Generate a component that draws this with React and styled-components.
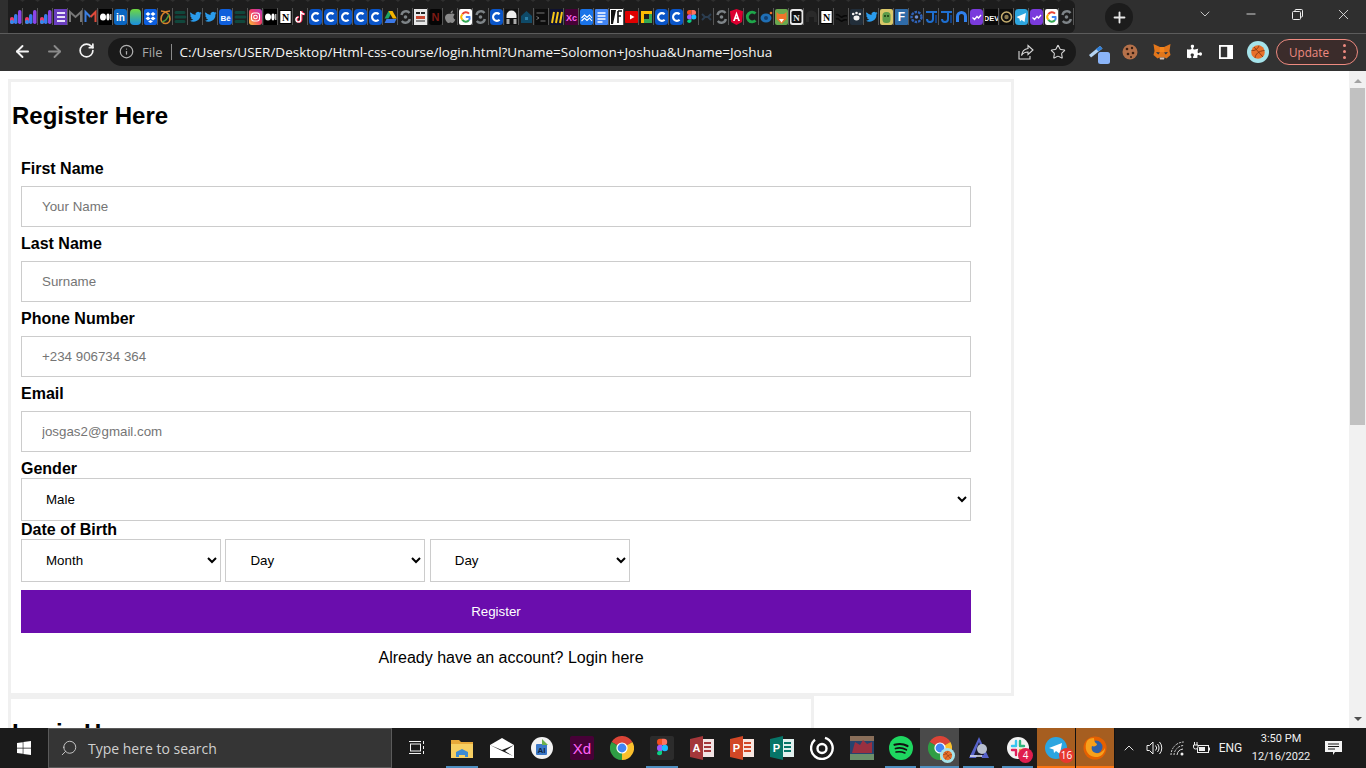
import React from 'react';
import styled, { createGlobalStyle } from 'styled-components';
import { ArrowLeft, ArrowRight, RotateCw, Info, Star, Plus, ChevronDown, Minus, X, Search } from 'lucide-react';
import { FaWindows, FaPuzzlePiece } from 'react-icons/fa';

const GlobalStyle = createGlobalStyle`
  html, body {
    margin: 0;
    height: 100%;
    overflow: hidden;
    background: #fff;
    font-family: "Liberation Sans", Arial, sans-serif;
  }
`;

const Screen = styled.div`
  width: 1366px;
  height: 768px;
  display: flex;
  flex-direction: column;
  overflow: hidden;
`;

/* title bar with the tab strip */
const TitleBar = styled.div`
  height: 33px;
  flex: none;
  display: flex;
  align-items: stretch;
  padding-left: 8px;
  background: #2f2f2f;
  border-bottom: 1px solid #5c5c5c;
  color: #e8e8e8;
`;

const TabStrip = styled.div`
  width: 1067px;
  flex: none;
  display: flex;
  background: #1d1d1d;
  border-bottom-right-radius: 6px;
  border-top-right-radius: 6px;
`;

const Tab = styled.div`
  width: 15.03px;
  flex: none;
  position: relative;
  display: flex;
  align-items: flex-start;
  justify-content: center;
  padding-top: 9px;
  box-sizing: border-box;

  &::after {
    content: '';
    position: absolute;
    right: 0;
    top: 8px;
    width: 1px;
    height: 17px;
    background: #555;
  }

  &::before {
    content: '';
    position: absolute;
    right: -2px;
    top: 0;
    width: 5px;
    height: 2px;
    background: #2f2f2f;
    clip-path: polygon(0 0, 100% 0, 50% 100%);
  }
`;

const NewTab = styled.div`
  width: 28px;
  height: 28px;
  margin: 3px 0 0 30px;
  border-radius: 50%;
  background: #1c1c1c;
  display: flex;
  align-items: center;
  justify-content: center;
`;

const WindowControls = styled.div`
  margin-left: auto;
  display: flex;
`;

const WindowButton = styled.div`
  width: 46px;
  height: 28px;
  display: flex;
  align-items: center;
  justify-content: center;
`;

/* address bar row */
const Toolbar = styled.div`
  height: 37px;
  flex: none;
  display: flex;
  align-items: center;
  background: #323232;
  color: #f0f0f0;
  padding-bottom: 2px;
  box-sizing: border-box;
`;

const NavButton = styled.div`
  width: 32px;
  display: flex;
  justify-content: center;
  color: ${(p) => (p.$off ? '#8a8a8a' : '#f4f4f4')};
`;

const NavGroup = styled.div`
  width: 108px;
  flex: none;
  display: flex;
  padding-left: 6px;
  box-sizing: border-box;
`;

const AddressPill = styled.div`
  width: 968px;
  height: 28px;
  flex: none;
  display: flex;
  align-items: center;
  border-radius: 14px;
  background: #1a1a1a;
  padding: 0 10px 0 11px;
  box-sizing: border-box;
  font-family: "Open Sans", sans-serif;
`;

const Scheme = styled.span`
  margin-left: 8px;
  padding-right: 8px;
  border-right: 1px solid #8a8a8a;
  font-size: 13px;
  line-height: 16px;
  color: #a8a8a8;
`;

const Url = styled.span`
  margin-left: 8px;
  font-size: 13.5px;
  color: #f5f5f5;
  white-space: nowrap;
`;

const PillActions = styled.div`
  margin-left: auto;
  display: flex;
  align-items: center;
  gap: 16px;
  color: #d8d8d8;
`;

const Extensions = styled.div`
  display: flex;
  align-items: center;
  margin-left: 9px;
`;

const ExtSlot = styled.div`
  width: ${(p) => p.$w || 32}px;
  height: 28px;
  flex: none;
  display: flex;
  align-items: center;
  justify-content: center;
`;

const UpdatePill = styled.div`
  width: 82px;
  height: 26px;
  margin-left: 2px;
  box-sizing: border-box;
  border: 1px solid #ee8a80;
  border-radius: 13px;
  background: #3b2c2b;
  display: flex;
  align-items: center;
  justify-content: space-between;
  padding: 0 11px 0 12px;
  color: #ee8a80;
  font-size: 11.7px;
  font-family: "Open Sans", sans-serif;
`;

const Dots = styled.span`
  display: flex;
  flex-direction: column;
  gap: 3px;

  i {
    width: 3px;
    height: 3px;
    border-radius: 50%;
    background: #ee8a80;
  }
`;

/* page */
const Viewport = styled.div`
  flex: 1;
  min-height: 0;
  display: flex;
  background: #fff;
`;

const Page = styled.div`
  flex: 1;
  min-width: 0;
  overflow: hidden;
  padding: 8px;
`;

const Card = styled.section`
  width: ${(p) => p.$width}px;
  border: 3px solid #f0f0f0;
`;

const Heading = styled.h2`
  margin: 20px 1px 30px;
  font-size: 24px;
  line-height: 28px;
  font-weight: bold;
  color: #000;
`;

const Form = styled.form`
  padding: 0 10px;
`;

const Label = styled.label`
  display: block;
  font-size: 16px;
  font-weight: bold;
  line-height: 18px;
  color: #000;
`;

const Input = styled.input`
  display: block;
  width: 950px;
  height: 41px;
  margin: 8px 0;
  box-sizing: border-box;
  padding: 0 20px;
  border: 1px solid #ccc;
  font-family: "Liberation Sans", Arial, sans-serif;
  font-size: 13.33px;

  &::placeholder {
    color: #757575;
  }
`;

const Select = styled.select`
  display: block;
  width: ${(p) => p.$width || 950}px;
  height: 43px;
  box-sizing: border-box;
  padding: 0 0 0 20px;
  border: 1px solid #ccc;
  border-radius: 0;
  background: #fff;
  color: #000;
  font-family: "Liberation Sans", Arial, sans-serif;
  font-size: 13.33px;
`;

const DateRow = styled.div`
  display: flex;
  gap: 4.4px;
`;

const Submit = styled.button`
  display: block;
  width: 950px;
  height: 43px;
  margin-top: 8px;
  border: none;
  background: #6a0dad;
  color: #fff;
  font-family: "Liberation Sans", Arial, sans-serif;
  font-size: 13.33px;
`;

const LoginHint = styled.p`
  margin: 16px 0 26px;
  text-align: center;
  font-size: 16px;
  line-height: 18px;
  color: #000;
`;

const Scrollbar = styled.div`
  width: 17px;
  flex: none;
  display: flex;
  flex-direction: column;
  align-items: center;
  background: #f1f1f1;
  color: #505050;
`;

const ScrollArrow = styled.div`
  width: 0;
  height: 0;
  border-left: 4px solid transparent;
  border-right: 4px solid transparent;
  ${(p) => (p.$down ? 'border-top: 4px solid #505050;' : 'border-bottom: 4px solid #a3a3a3;')}
  margin: ${(p) => (p.$down ? 'auto 0 7px' : '8px 0 5px')};
`;

const ScrollThumb = styled.div`
  width: 15px;
  height: 337px;
  background: #c1c1c1;
`;

/* windows taskbar */
const Taskbar = styled.div`
  height: 40px;
  flex: none;
  display: flex;
  background: #1b1b1b;
  color: #f2f2f2;
`;

const StartButton = styled.div`
  width: 48px;
  flex: none;
  display: flex;
  align-items: center;
  justify-content: center;
`;

const SearchBox = styled.div`
  width: 344px;
  flex: none;
  box-sizing: border-box;
  display: flex;
  align-items: center;
  gap: 10px;
  padding-left: 11px;
  background: #353535;
  border: 1px solid #5a5a5a;
  color: #d0d0d0;
  font-family: "Open Sans", sans-serif;
  font-size: 14px;
`;

const SearchGlyph = styled(Search)`
  transform: scaleX(-1);
`;

const UpChevron = styled(ChevronDown)`
  transform: rotate(180deg);
`;

const TaskTile = styled.div`
  width: ${(p) => p.$w || 40}px;
  height: 40px;
  flex: none;
  box-sizing: border-box;
  position: relative;
  display: flex;
  align-items: center;
  justify-content: center;
  background: ${(p) => (p.$flash ? '#a65e20' : p.$active ? '#4a4a4a' : 'transparent')};
  border-right: ${(p) => (p.$flash ? '1px solid #111' : 'none')};

  &::after {
    content: '';
    display: ${(p) => (p.$line ? 'block' : 'none')};
    position: absolute;
    left: ${(p) => (p.$active || p.$flash ? 0 : '4px')};
    right: ${(p) => (p.$active || p.$flash ? 0 : '4px')};
    bottom: 0;
    height: 2px;
    background: ${(p) => (p.$flash ? '#f97414' : '#4f8fc0')};
  }
`;

const Badge = styled.span`
  position: absolute;
  right: ${(p) => p.$right}px;
  bottom: 5px;
  min-width: 15px;
  height: 15px;
  padding: 0 1px;
  box-sizing: border-box;
  border-radius: 8px;
  background: ${(p) => p.$bg || '#e01e4e'};
  color: #fff;
  font-family: "Open Sans", sans-serif;
  font-size: 10px;
  line-height: 15px;
  text-align: center;
`;

const Tray = styled.div`
  display: flex;
  align-items: center;
`;

const TrayItem = styled.div`
  width: ${(p) => p.$w}px;
  flex: none;
  display: flex;
  justify-content: center;
  color: #f0f0f0;
`;

const TrayText = styled.div`
  font-family: Roboto, sans-serif;
  font-size: ${(p) => p.$size || 12}px;
  line-height: 18px;
  text-align: center;
  white-space: nowrap;
`;

/* favicons, 13x16 because the tabs are squeezed so far they clip them */
const FavSvg = ({ children }) => (
  <svg width="13" height="16" viewBox="0 0 13 16">{children}</svg>
);

const FavLetter = ({ bg, fg = '#fff', children, size = 11, r = 3 }) => (
  <FavSvg>
    <rect width="13" height="16" rx={r} fill={bg} />
    <text x="6.5" y="12" textAnchor="middle" fontFamily="Liberation Sans" fontWeight="bold" fontSize={size} fill={fg}>{children}</text>
  </FavSvg>
);

const favicons = {
  bars: (
    <FavSvg>
      <rect x="1" y="8" width="4" height="7" rx="2" fill="#ee3b6f" />
      <rect x="1" y="11" width="4" height="4" rx="2" fill="#2f8df0" />
      <rect x="5" y="5" width="3.5" height="10" rx="1.7" fill="#3a7bf0" />
      <rect x="9" y="1" width="3.5" height="14" rx="1.7" fill="#8b45e8" />
    </FavSvg>
  ),
  list: (
    <FavSvg>
      <rect width="13" height="16" fill="#6b3fc0" />
      <path d="M3 4h8M3 8h8M3 12h8" stroke="#e9e2fa" strokeWidth="2" />
    </FavSvg>
  ),
  greyM: <FavSvg><path d="M1 13V3l5.5 5L12 3v10" fill="none" stroke="#777" strokeWidth="2" /></FavSvg>,
  gmail: (
    <FavSvg>
      <path d="M1.5 13V3l5 5" fill="none" stroke="#3d7fe0" strokeWidth="2" />
      <path d="M11.5 13V3l-5 5" fill="none" stroke="#e04a3a" strokeWidth="2" />
    </FavSvg>
  ),
  medium: (
    <FavSvg>
      <rect width="13" height="16" fill="#000" />
      <ellipse cx="4" cy="8" rx="3" ry="3.6" fill="#fff" />
      <ellipse cx="9" cy="8" rx="1.6" ry="3.4" fill="#fff" />
      <rect x="11.3" y="5" width="1" height="6" fill="#fff" />
    </FavSvg>
  ),
  linkedin: <FavLetter bg="#0a66c2" size={10}>in</FavLetter>,
  gradient: (
    <FavSvg>
      <defs>
        <linearGradient id="gb" x1="0" y1="0" x2="0" y2="1">
          <stop offset="0" stopColor="#6ed840" />
          <stop offset="1" stopColor="#1a8fe0" />
        </linearGradient>
      </defs>
      <rect x="1" width="11" height="16" rx="4" fill="url(#gb)" />
    </FavSvg>
  ),
  dropbox: (
    <FavSvg>
      <rect width="13" height="16" rx="2" fill="#0d5fe0" />
      <path d="M4 3l2.5 2L4 7 1.5 5zM9 3l2.5 2L9 7 6.5 5zM4 7.5l2.5 2-2.5 2-2.5-2zM9 7.5l2.5 2-2.5 2-2.5-2zM4 12.5l2.5-1.5L9 12.5 6.5 14z" fill="#fff" />
    </FavSvg>
  ),
  ring: (
    <FavSvg>
      <path d="M2 2c6 0 9 4 9 8a4.5 4.5 0 1 1-9 0c0-4 3-8 9-8" fill="none" stroke="#d8822a" strokeWidth="1.6" />
      <path d="M3 13c3-1 6-4 7-8" fill="none" stroke="#4f9a3c" strokeWidth="1.4" />
    </FavSvg>
  ),
  stack: (
    <FavSvg>
      <path d="M2 3.5h8M2 8h9M2 12.5h8" stroke="#10473c" strokeWidth="3" strokeLinecap="round" />
    </FavSvg>
  ),
  twitter: (
    <FavSvg>
      <path d="M12.6 4c-.5.2-.9.3-1.4.4.5-.3.9-.8 1.1-1.4-.5.3-1 .5-1.6.6a2.5 2.5 0 0 0-4.2 2.3A7 7 0 0 1 1.4 3.3a2.5 2.5 0 0 0 .8 3.3c-.4 0-.8-.1-1.1-.3 0 1.2.9 2.2 2 2.5-.4.1-.8.1-1.1 0 .3 1 1.2 1.7 2.3 1.7A5 5 0 0 1 .6 11.6a7 7 0 0 0 10.8-6.2c.5-.4.9-.8 1.2-1.4z" fill="#2a9bec" />
    </FavSvg>
  ),
  behance: <FavLetter bg="#0f5fdc" size={8}>Bē</FavLetter>,
  instagram: (
    <FavSvg>
      <defs>
        <linearGradient id="ig" x1="0" y1="1" x2="1" y2="0">
          <stop offset="0" stopColor="#fbbf35" />
          <stop offset="0.55" stopColor="#ee3a6a" />
          <stop offset="1" stopColor="#b43ac2" />
        </linearGradient>
      </defs>
      <rect width="13" height="16" rx="3" fill="url(#ig)" />
      <rect x="2.5" y="4" width="8" height="8" rx="2.4" fill="none" stroke="#fff" strokeWidth="1.1" />
      <circle cx="6.5" cy="8" r="1.8" fill="none" stroke="#fff" strokeWidth="1.1" />
    </FavSvg>
  ),
  notion: (
    <FavSvg>
      <rect x="0.8" y="1.5" width="11.4" height="13" fill="#fff" stroke="#000" strokeWidth="1" />
      <text x="6.5" y="12" textAnchor="middle" fontFamily="Liberation Serif" fontWeight="bold" fontSize="10" fill="#000">N</text>
    </FavSvg>
  ),
  tiktok: (
    <FavSvg>
      <path d="M7.5 2v8.5a2.4 2.4 0 1 1-2.4-2.4M7.5 2c.3 2 1.6 3 3.5 3.2" fill="none" stroke="#ff2a55" strokeWidth="2" />
      <path d="M6.7 2v8.5a2.4 2.4 0 1 1-2.4-2.4M6.7 2c.3 2 1.6 3 3.5 3.2" fill="none" stroke="#fff" strokeWidth="1.4" />
    </FavSvg>
  ),
  c: (
    <FavSvg>
      <rect width="13" height="16" rx="3.5" fill="#0a55c8" />
      <path d="M9.6 5.3a3.8 3.8 0 1 0 0 5.4" fill="none" stroke="#fff" strokeWidth="2.2" />
    </FavSvg>
  ),
  drive: (
    <FavSvg>
      <path d="M4.5 2h4l-4 7.5h-4z" fill="#1da462" />
      <path d="M4.5 2h4l4.3 7.5h-4z" fill="#f4b400" />
      <path d="M2.5 10h10l-2 4h-10z" fill="#3b78e7" />
    </FavSvg>
  ),
  refresh: (
    <FavSvg>
      <path d="M2.5 6A4.5 4.5 0 0 1 10.5 4M10.8 10a4.5 4.5 0 0 1-8 2" fill="none" stroke="#7e8488" strokeWidth="2.4" />
      <circle cx="6.5" cy="8" r="1.8" fill="#7e8488" />
    </FavSvg>
  ),
  doc: (
    <FavSvg>
      <rect width="13" height="16" fill="#e8e8e8" />
      <path d="M2 3h4v2H2zM7 3h4v2H7z" fill="#222" />
      <rect x="2" y="7" width="9" height="3" fill="#c8452f" />
      <path d="M2 12h9" stroke="#666" strokeWidth="1.5" />
    </FavSvg>
  ),
  darkN: <FavLetter bg="#050505" fg="#7d1a14" size={11}>N</FavLetter>,
  apple: (
    <FavSvg>
      <path d="M6.5 5c1-.6 3-.9 4.2.8-2 1.4-1.5 4 .6 4.8-.8 2.2-2 3.4-3 3.4-.8 0-1.1-.5-1.9-.5s-1.1.5-1.9.5C3 14 1 10.8 1 8.5 1 5.5 4 4 6.5 5zM6.5 4.5C6.4 3 7.5 1.7 9 1.5c.1 1.6-1 2.9-2.5 3z" fill="#8a8a8a" />
    </FavSvg>
  ),
  google: (
    <FavSvg>
      <rect width="13" height="16" rx="2" fill="#fff" />
      <path d="M10 4.7a4 4 0 0 0-6.6.6" fill="none" stroke="#ea4335" strokeWidth="2" />
      <path d="M3.4 5.3a4 4 0 0 0 0 5.4" fill="none" stroke="#fbbc05" strokeWidth="2" />
      <path d="M3.4 10.7a4 4 0 0 0 6.6.5" fill="none" stroke="#34a853" strokeWidth="2" />
      <path d="M10 11.2A4 4 0 0 0 10.5 8H6.8" fill="none" stroke="#4285f4" strokeWidth="2" />
    </FavSvg>
  ),
  headphones: (
    <FavSvg>
      <rect width="13" height="16" fill="#111" />
      <path d="M1.5 9V6.5a5 5 0 0 1 10 0V9z" fill="#eee" />
      <rect x="1.5" y="10" width="3" height="5" fill="#aaa" />
      <rect x="8.5" y="10" width="3" height="5" fill="#aaa" />
    </FavSvg>
  ),
  house: (
    <FavSvg>
      <path d="M6.5 2L12 7v7H1V7z" fill="#0f4a68" />
      <rect x="5" y="8" width="3" height="3" fill="#2a7ea6" />
    </FavSvg>
  ),
  terminal: (
    <FavSvg>
      <rect width="13" height="16" fill="#0d0d0d" />
      <path d="M1.5 4h8M1.5 7.5l2.5 1.5-2.5 1.5M5.5 12h5" fill="none" stroke="#777" strokeWidth="1" />
    </FavSvg>
  ),
  yellowM: (
    <FavSvg>
      <rect width="13" height="16" fill="#0f1230" />
      <path d="M2 14l2-11M6 14l2-11M10 14l2-11" stroke="#f5c518" strokeWidth="2" />
    </FavSvg>
  ),
  xd: <FavLetter bg="#470137" fg="#ff61f6" size={9} r={1}>Xc</FavLetter>,
  wave: (
    <FavSvg>
      <rect width="13" height="16" rx="2" fill="#1a73e8" />
      <path d="M1.5 9l3-3 2.5 2.5L9.5 6l2.5 3M1.5 12l3-3 2.5 2.5L9.5 9l2.5 3" fill="none" stroke="#fff" strokeWidth="1.1" />
    </FavSvg>
  ),
  docs: (
    <FavSvg>
      <rect width="13" height="16" rx="1" fill="#4285f4" />
      <path d="M2.5 4h8M2.5 7h8M2.5 10h8M2.5 13h5" stroke="#fff" strokeWidth="1.5" />
    </FavSvg>
  ),
  whiteF: (
    <FavSvg>
      <rect width="13" height="16" fill="#fff" />
      <path d="M1 1h5L3 15H1z" fill="#111" />
      <path d="M8 2h4M8 2v12M8 7h3" fill="none" stroke="#111" strokeWidth="1.6" />
    </FavSvg>
  ),
  youtube: (
    <FavSvg>
      <rect y="2" width="13" height="12" rx="1" fill="#e00000" />
      <path d="M5 5.5L9.5 8 5 10.5z" fill="#fff" />
    </FavSvg>
  ),
  meet: (
    <FavSvg>
      <rect x="1" y="2" width="11" height="12" fill="#fbbc04" />
      <rect x="4" y="5" width="8" height="9" fill="#34a853" />
      <rect x="4" y="5" width="5" height="5" fill="#1d1d1d" />
    </FavSvg>
  ),
  figma: (
    <FavSvg>
      <path d="M2 3.5A2.5 2.5 0 0 1 4.5 1h2v5h-2A2.5 2.5 0 0 1 2 3.5z" fill="#f24e1e" />
      <path d="M6.5 1h2a2.5 2.5 0 0 1 0 5h-2z" fill="#ff7262" />
      <path d="M2 8a2.5 2.5 0 0 1 2.5-2.5h2v5h-2A2.5 2.5 0 0 1 2 8z" fill="#a259ff" />
      <circle cx="8.8" cy="8" r="2.5" fill="#1abcfe" />
      <path d="M2 12.5A2.5 2.5 0 0 1 4.5 10.5h2v2a2.5 2.5 0 0 1-4.5 0z" fill="#0acf83" />
    </FavSvg>
  ),
  darkX: <FavSvg><path d="M2 11l3-3-3-3M11 5L8 8l3 3M5 8h3" fill="none" stroke="#2b3d50" strokeWidth="2" /></FavSvg>,
  angular: (
    <FavSvg>
      <path d="M6.5 0L13 2.3 12 13l-5.5 3L1 13 0 2.3z" fill="#dd0031" />
      <path d="M6.5 2.5L3 12h1.8l.7-2h2l.7 2H10zM6 8.5l.5-2 .5 2z" fill="#fff" />
    </FavSvg>
  ),
  greenC: <FavSvg><path d="M10.5 4.5a4.8 4.8 0 1 0 0 7" fill="none" stroke="#1fa64a" strokeWidth="3" /></FavSvg>,
  blueBall: (
    <FavSvg>
      <ellipse cx="6" cy="9" rx="5.5" ry="4.5" fill="#1f6fb5" />
      <circle cx="6" cy="9" r="2" fill="#123e70" />
      <circle cx="11" cy="4" r="1.3" fill="#e8712c" />
    </FavSvg>
  ),
  fox: (
    <FavSvg>
      <rect width="13" height="16" rx="2" fill="#6aa84f" />
      <path d="M1.5 3l2.5 2h5l2.5-2v7l-5 5-5-5z" fill="#f0742a" />
      <path d="M4 10h5l-2.5 3.5z" fill="#fff" />
    </FavSvg>
  ),
  notionOutline: (
    <FavSvg>
      <rect width="13" height="16" rx="2.5" fill="#e8e8e8" />
      <rect x="1.5" y="2" width="10" height="12" rx="1.5" fill="#111" />
      <text x="6.5" y="11.5" textAnchor="middle" fontFamily="Liberation Serif" fontWeight="bold" fontSize="9" fill="#eee">N</text>
    </FavSvg>
  ),
  dark: <FavSvg><path d="M1 7a5.5 5.5 0 0 1 11 0v6H9V8H4v5H1z" fill="#2a2a2a" /></FavSvg>,
  darkWave: <FavSvg><path d="M1 6c3-2 4 3 6 2s2-2 5-1M1 10c3-2 4 3 6 2s2-2 5-1" fill="none" stroke="#080808" strokeWidth="1.6" /></FavSvg>,
  paw: (
    <FavSvg>
      <rect width="13" height="16" rx="2" fill="#222e3a" />
      <circle cx="3.2" cy="5" r="1.3" fill="#f2f2f2" />
      <circle cx="6.5" cy="4" r="1.3" fill="#f2f2f2" />
      <circle cx="9.8" cy="5" r="1.3" fill="#f2f2f2" />
      <ellipse cx="6.5" cy="9" rx="3" ry="2.4" fill="#f2f2f2" />
    </FavSvg>
  ),
  greenBot: (
    <FavSvg>
      <rect width="13" height="16" rx="2" fill="#d9c869" />
      <rect x="2.5" y="3" width="8" height="11" rx="3.5" fill="#5d9c4a" />
      <circle cx="5" cy="7" r="1" fill="#183a10" />
      <circle cx="8" cy="7" r="1" fill="#183a10" />
    </FavSvg>
  ),
  blueF: <FavLetter bg="#2f6ba8" size={12} r={1}>F</FavLetter>,
  gear: (
    <FavSvg>
      <circle cx="6.5" cy="8" r="5" fill="none" stroke="#2f62b8" strokeWidth="2.4" strokeDasharray="2.5 1" />
      <circle cx="6.5" cy="8" r="1.8" fill="#6e8fd0" />
    </FavSvg>
  ),
  jr: (
    <FavSvg>
      <path d="M1 3h11M8 3v7a3 3 0 0 1-6 0" fill="none" stroke="#1f6fd0" strokeWidth="2" />
      <path d="M11 6v8" stroke="#123f80" strokeWidth="2" />
    </FavSvg>
  ),
  arch: <FavSvg><path d="M2.5 13V7.5a4 4 0 0 1 8 0V13" fill="none" stroke="#2f80ed" strokeWidth="3" /></FavSvg>,
  purple: (
    <FavSvg>
      <rect width="13" height="16" rx="3.5" fill="#7a3bdc" />
      <path d="M2.5 8.5l2 2 2.5-3 1.5 1.5 2.5-3" fill="none" stroke="#fff" strokeWidth="1.3" />
    </FavSvg>
  ),
  dev: <FavLetter bg="#0a0a0a" size={7.5} r={1}>DEV</FavLetter>,
  badge: (
    <FavSvg>
      <rect width="13" height="16" fill="#0e0e0e" />
      <circle cx="6.5" cy="8" r="5" fill="none" stroke="#c8b070" strokeWidth="1.5" />
      <circle cx="6.5" cy="8" r="2.2" fill="#8a7a50" />
    </FavSvg>
  ),
  telegram: (
    <FavSvg>
      <rect width="13" height="16" rx="3.5" fill="#2ea6df" />
      <path d="M1.5 8l9.5-4-1.5 9-3-2-1.5 1.5-.5-2.8z" fill="#fff" />
    </FavSvg>
  ),
};

const tabRun = [
  'bars', 'bars', 'bars', 'list', 'greyM', 'gmail', 'medium', 'linkedin', 'gradient', 'dropbox',
  'ring', 'stack', 'twitter', 'twitter', 'behance', 'stack', 'instagram', 'medium', 'notion', 'tiktok',
  'c', 'c', 'c', 'c', 'c', 'drive', 'refresh', 'doc', 'darkN', 'apple',
  'google', 'refresh', 'c', 'headphones', 'house', 'terminal', 'yellowM', 'xd', 'wave', 'docs',
  'whiteF', 'youtube', 'meet', 'c', 'c', 'figma', 'darkX', 'refresh', 'angular', 'greenC',
  'blueBall', 'fox', 'notionOutline', 'dark', 'notion', 'darkWave', 'paw', 'twitter', 'greenBot', 'blueF',
  'gear', 'jr', 'jr', 'arch', 'purple', 'dev', 'badge', 'telegram', 'purple', 'google', 'refresh',
];

/* toolbar drawings */
const ShareIcon = () => (
  <svg width="16" height="16" viewBox="0 0 16 16" fill="none" stroke="#d8d8d8" strokeWidth="1.1">
    <path d="M1 7v8h11v-3" />
    <path d="M10 1.5l5 4.5-5 4.5V8C7 8 5 9 3.5 11.5 4 7.5 6 5 10 4.5z" />
  </svg>
);

const PencilExt = () => (
  <svg width="24" height="28" viewBox="0 0 24 28">
    <path d="M1 17L12 8l2.5 2.5L3 19.5z" fill="#b5d4f4" />
    <path d="M8 11l4-3 2.5 2.5-4 3z" fill="#2f7fd8" />
    <rect x="10" y="14" width="12" height="12" rx="2.5" fill="#8ab4f8" />
  </svg>
);

const CookieExt = () => (
  <svg width="18" height="18" viewBox="0 0 18 18">
    <circle cx="9" cy="9" r="7.5" fill="#b5714a" />
    <circle cx="6" cy="6" r="1.3" fill="#3a1f12" />
    <circle cx="11" cy="5" r="1.2" fill="#3a1f12" />
    <circle cx="12" cy="10" r="1.3" fill="#3a1f12" />
    <circle cx="7" cy="11" r="1.3" fill="#3a1f12" />
    <circle cx="10" cy="14" r="1" fill="#3a1f12" />
  </svg>
);

const FoxExt = () => (
  <svg width="18" height="17" viewBox="0 0 18 17">
    <path d="M0.5 1L7 4h4l6.500-3L16.500 8l1 4-4 3.500-2-1h-5l-2 1-4-3.500 1-4z" fill="#e2761b" />
    <path d="M3 9l4 .5-1.800 2zM15 9l-4 .5 1.800 2z" fill="#233447" />
    <path d="M6.500 14.500h5L11 16.500H7z" fill="#d7c1b3" />
    <path d="M7 4h4l.5 5h-5z" fill="#f6851b" />
  </svg>
);

const SidePanelIcon = () => (
  <svg width="14" height="14" viewBox="0 0 14 14">
    <rect width="14" height="14" fill="#fff" />
    <rect x="1.8" y="1.8" width="6.4" height="10.4" fill="#323232" />
  </svg>
);

const BallAvatar = ({ size = 22 }) => (
  <svg width={size} height={size} viewBox="0 0 22 22">
    <circle cx="11" cy="11" r="11" fill="#a5e3ea" />
    <circle cx="11" cy="11" r="6.8" fill="#e8702a" />
    <path d="M4.5 9.5C8 10 11 8 12 4.5M8 17c.5-4 3.5-7 9.5-7.5M7 6l9 10" fill="none" stroke="#7a3210" strokeWidth="0.8" />
  </svg>
);

const RestoreIcon = () => (
  <svg width="11" height="11" viewBox="0 0 11 11" fill="none" stroke="#eee" strokeWidth="1">
    <rect x="0.5" y="2.5" width="8" height="8" rx="1" />
    <path d="M3 2.5V1.500a1 1 0 0 1 1-1h5.500a1 1 0 0 1 1 1V7a1 1 0 0 1-1 1h-1" />
  </svg>
);

/* taskbar drawings */
const ChromeLogo = ({ size = 24 }) => (
  <svg width={size} height={size} viewBox="0 0 24 24">
    <path d="M12 12L1.6 6A12 12 0 0 1 22.4 6z" fill="#db4437" />
    <path d="M12 12L22.4 6A12 12 0 0 1 12 24z" fill="#fbc02d" />
    <path d="M12 12V24A12 12 0 0 1 1.6 6z" fill="#2f9e44" />
    <circle cx="12" cy="12" r="5.6" fill="#fff" />
    <circle cx="12" cy="12" r="4.4" fill="#4285f4" />
  </svg>
);

const ExplorerIcon = () => (
  <svg width="22" height="19" viewBox="0 0 22 19">
    <path d="M0 1h8l2 2h12v15H0z" fill="#e8a93a" />
    <rect y="5" width="22" height="14" fill="#f7cf62" />
    <path d="M5 18v-5l6-3 6 3v5h-3v-2H8v2z" fill="#3d8bd4" />
  </svg>
);

const MailIcon = () => (
  <svg width="24" height="20" viewBox="0 0 24 20">
    <path d="M0 7L12 0l12 7v13H0z" fill="#fff" />
    <path d="M0 7l12 5 12-5-9 6 8 5-11-5z" fill="#1b1b1b" />
  </svg>
);

const AiIcon = () => (
  <svg width="22" height="22" viewBox="0 0 22 22">
    <circle cx="11" cy="11" r="11" fill="#f2f2f2" />
    <rect x="5" y="7" width="11" height="11" rx="1" fill="#3a78c8" />
    <path d="M11 2l6 6h-6z" fill="#6ab04c" />
    <text x="10.5" y="16" textAnchor="middle" fontFamily="Liberation Sans" fontWeight="bold" fontSize="8" fill="#10233f">AI</text>
  </svg>
);

const XdIcon = () => (
  <svg width="24" height="24" viewBox="0 0 24 24">
    <rect width="24" height="24" rx="2" fill="#470137" />
    <text x="12" y="18" textAnchor="middle" fontFamily="Liberation Sans" fontSize="15" fill="#ff61f6">Xd</text>
  </svg>
);

const FigmaIcon = () => (
  <svg width="24" height="24" viewBox="0 0 24 24">
    <rect width="24" height="24" rx="2" fill="#2c2c2c" />
    <path d="M7 6a3.2 3.2 0 0 1 3.2-3.2H12V9.2H10.2A3.2 3.2 0 0 1 7 6z" fill="#f24e1e" />
    <path d="M12 2.8h2a3.2 3.2 0 0 1 0 6.4h-2z" fill="#ff7262" />
    <path d="M7 12a3.2 3.2 0 0 1 3.2-3.2H12v6.4H10.2A3.2 3.2 0 0 1 7 12z" fill="#a259ff" />
    <circle cx="14.8" cy="12" r="3.2" fill="#1abcfe" />
    <path d="M7 18a3.2 3.2 0 0 1 3.2-3.2H12V18a3.2 3.2 0 0 1-5 0z" fill="#0acf83" />
  </svg>
);

const OfficeIcon = ({ letter, dark, light, back }) => (
  <svg width="24" height="24" viewBox="0 0 24 24">
    <rect x="11" y="3" width="13" height="18" fill={back} />
    <path d="M14 7h7M14 11h7M14 15h7" stroke={light} strokeWidth="2" />
    <path d="M0 3l13-3v24L0 21z" fill={dark} />
    <text x="6.5" y="16" textAnchor="middle" fontFamily="Liberation Sans" fontWeight="bold" fontSize="11" fill="#fff">{letter}</text>
  </svg>
);

const RingIcon = () => (
  <svg width="24" height="24" viewBox="0 0 24 24" fill="none" stroke="#fff">
    <path d="M15 1.8A10.8 10.8 0 1 1 5 3.8" strokeWidth="2.4" />
    <circle cx="12" cy="12.5" r="4.5" strokeWidth="2.4" />
  </svg>
);

const PesIcon = () => (
  <svg width="24" height="24" viewBox="0 0 24 24">
    <rect width="24" height="24" fill="#27446e" />
    <rect width="24" height="5" fill="#8a6f5a" />
    <path d="M2 17l3-11 5 3 3-5 4 4 5-2v11z" fill="#9a3040" />
    <rect y="18" width="24" height="6" fill="#6a8f6a" />
  </svg>
);

const SpotifyIcon = () => (
  <svg width="24" height="24" viewBox="0 0 24 24" fill="none" stroke="#111" strokeLinecap="round">
    <circle cx="12" cy="12" r="12" fill="#1ed760" stroke="none" />
    <path d="M5.5 8.8c4-1.2 9-1 13 1.2" strokeWidth="2.2" />
    <path d="M6.5 12.5c3.5-1 7.5-.6 10.8 1.2" strokeWidth="1.8" />
    <path d="M7 16c3-.7 6-.4 9 1" strokeWidth="1.5" />
  </svg>
);

const AffinityIcon = () => (
  <svg width="24" height="24" viewBox="0 0 24 24">
    <path d="M12 1L2 22h7l3-7 3 7h7z" fill="#5661c8" />
    <path d="M12 6l-5 13h10z" fill="#1b1b2a" />
    <circle cx="15" cy="13" r="5" fill="#b9c0d0" />
    <path d="M3 20h12" stroke="#e4e6f0" strokeWidth="1.5" />
  </svg>
);

const SlackIcon = () => (
  <svg width="22" height="22" viewBox="0 0 22 22">
    <circle cx="11" cy="11" r="11" fill="#f2f2f2" />
    <path d="M9 4v5M5 9h4" stroke="#36c5f0" strokeWidth="2.4" strokeLinecap="round" />
    <path d="M13 4v5M13 9h4" stroke="#2eb67d" strokeWidth="2.4" strokeLinecap="round" />
    <path d="M5 13h4M9 13v5" stroke="#e01e5a" strokeWidth="2.4" strokeLinecap="round" />
    <path d="M13 13h4M13 13v5" stroke="#ecb22e" strokeWidth="2.4" strokeLinecap="round" />
  </svg>
);

const TelegramIcon = () => (
  <svg width="22" height="22" viewBox="0 0 22 22">
    <circle cx="11" cy="11" r="11" fill="#2ca5e0" />
    <path d="M4 11l13-5-2 11-4-3-2 2-.5-3.5z" fill="#fff" />
  </svg>
);

const FirefoxIcon = () => (
  <svg width="24" height="24" viewBox="0 0 24 24">
    <circle cx="12" cy="12" r="11.5" fill="#e66000" />
    <circle cx="13" cy="11" r="6.5" fill="#2f5fa8" />
    <path d="M4 5c-3 6-1 15 8 16 5 .5 10-3 10-9-2 4-6 6-9 5-4-1-5-4-4-7 2 1 5 0 5-2-2-1-3-3-3-6-3 0-6 1-7 3z" fill="#f8a01c" />
  </svg>
);

const WifiIcon = () => (
  <svg width="16" height="15" viewBox="0 0 16 15" fill="none" stroke="#d8d8d8" strokeWidth="1">
    <path d="M1 14A13 13 0 0 1 14 1" strokeDasharray="2 1" />
    <path d="M4 14A10 10 0 0 1 14 4.5" strokeDasharray="2 1" />
    <path d="M7 14A7 7 0 0 1 13 8" />
    <circle cx="12" cy="13" r="1.5" fill="#f0f0f0" stroke="none" />
  </svg>
);

const SpeakerIcon = () => (
  <svg width="17" height="14" viewBox="0 0 17 14" fill="none" stroke="#f0f0f0" strokeWidth="1">
    <path d="M1 4.5h2.5L7 1v12L3.5 9.5H1z" />
    <path d="M9.5 4.5a3.500 3.500 0 0 1 0 5M11.500 3a6 6 0 0 1 0 8M13.500 1a9 9 0 0 1 0 12" />
  </svg>
);

const BatteryIcon = () => (
  <svg width="17" height="13" viewBox="0 0 17 13" fill="none" stroke="#f0f0f0" strokeWidth="1">
    <rect x="4.5" y="3.5" width="11" height="7" />
    <rect x="6" y="5" width="6" height="4" fill="#f0f0f0" stroke="none" />
    <path d="M16.5 5.5v3" />
    <path d="M1.500 0v3M4 0v3M0.5 3h4.500v2a2 2 0 0 1-2 2H2.500a2 2 0 0 1-2-2z" fill="#1b1b1b" />
  </svg>
);

const NotifyIcon = () => (
  <svg width="17" height="15" viewBox="0 0 17 15">
    <path d="M0 0h17v11H10l-2 3v-3H0z" fill="#f4f4f4" />
    <path d="M3 3h11M3 5.5h11M3 8h7" stroke="#1b1b1b" strokeWidth="1" />
  </svg>
);

const TaskViewIcon = () => (
  <svg width="16" height="16" viewBox="0 0 16 16" fill="none" stroke="#f2f2f2">
    <rect x="1.5" y="4" width="10" height="7" />
    <path d="M0 1.5h12M0 13.500h12M14.500 1v3M14.500 6v3M14.500 11v3" />
  </svg>
);

const taskApps = [
  { key: 'explorer', icon: <ExplorerIcon />, line: true },
  { key: 'mail', icon: <MailIcon /> },
  { key: 'ai', icon: <AiIcon /> },
  { key: 'xd', icon: <XdIcon /> },
  { key: 'chrome', icon: <ChromeLogo /> },
  { key: 'figma', icon: <FigmaIcon />, line: true },
  { key: 'access', icon: <OfficeIcon letter="A" dark="#a4373a" light="#a4373a" back="#f2e4e4" /> },
  { key: 'ppt', icon: <OfficeIcon letter="P" dark="#d24726" light="#d24726" back="#f8e6e0" /> },
  { key: 'publisher', icon: <OfficeIcon letter="P" dark="#077568" light="#077568" back="#e2f0ee" /> },
  { key: 'ring', icon: <RingIcon /> },
  { key: 'pes', icon: <PesIcon />, w: 39 },
  { key: 'spotify', icon: <SpotifyIcon />, w: 39, line: true },
];

const Dropdown = ({ options, ...rest }) => (
  <Select {...rest}>
    {options.map((o) => <option key={o}>{o}</option>)}
  </Select>
);

function App() {
  return (
    <Screen>
      <GlobalStyle />
      <TitleBar>
        <TabStrip>
          {tabRun.map((kind, i) => (
            <Tab key={i}>{favicons[kind]}</Tab>
          ))}
        </TabStrip>
        <NewTab><Plus size={17} strokeWidth={2.6} /></NewTab>
        <WindowControls>
          <WindowButton><ChevronDown size={16} strokeWidth={1.2} /></WindowButton>
          <WindowButton><Minus size={14} strokeWidth={1.5} /></WindowButton>
          <WindowButton><RestoreIcon /></WindowButton>
          <WindowButton><X size={17} strokeWidth={1.2} /></WindowButton>
        </WindowControls>
      </TitleBar>

      <Toolbar>
        <NavGroup>
          <NavButton><ArrowLeft size={19} strokeWidth={2.4} /></NavButton>
          <NavButton $off><ArrowRight size={19} strokeWidth={2.4} /></NavButton>
          <NavButton><RotateCw size={17} strokeWidth={2.4} /></NavButton>
        </NavGroup>
        <AddressPill>
          <Info size={15} color="#b0b0b0" />
          <Scheme>File</Scheme>
          <Url>C:/Users/USER/Desktop/Html-css-course/login.html?Uname=Solomon+Joshua&amp;Uname=Joshua</Url>
          <PillActions>
            <ShareIcon />
            <Star size={16} strokeWidth={1.6} />
          </PillActions>
        </AddressPill>
        <Extensions>
          <ExtSlot $w={29}><PencilExt /></ExtSlot>
          <ExtSlot><CookieExt /></ExtSlot>
          <ExtSlot><FoxExt /></ExtSlot>
          <ExtSlot><FaPuzzlePiece size={15} color="#fff" /></ExtSlot>
          <ExtSlot><SidePanelIcon /></ExtSlot>
          <ExtSlot><BallAvatar /></ExtSlot>
          <UpdatePill>
            Update
            <Dots><i /><i /><i /></Dots>
          </UpdatePill>
        </Extensions>
      </Toolbar>

      <Viewport>
        <Page>
          <Card $width={1000}>
            <Heading>Register Here</Heading>
            <Form>
              <Label>First Name</Label>
              <Input type="text" placeholder="Your Name" />
              <Label>Last Name</Label>
              <Input type="text" placeholder="Surname" />
              <Label>Phone Number</Label>
              <Input type="text" placeholder="+234 906734 364" />
              <Label>Email</Label>
              <Input type="text" placeholder="josgas2@gmail.com" />
              <Label>Gender</Label>
              <Dropdown options={['Male', 'Female']} />
              <Label>Date of Birth</Label>
              <DateRow>
                <Dropdown $width={200} options={['Month']} />
                <Dropdown $width={200} options={['Day']} />
                <Dropdown $width={200} options={['Day']} />
              </DateRow>
              <Submit type="button">Register</Submit>
              <LoginHint>Already have an account? Login here</LoginHint>
            </Form>
          </Card>
          <Card $width={800}>
            <Heading>Login Here</Heading>
          </Card>
        </Page>
        <Scrollbar>
          <ScrollArrow />
          <ScrollThumb />
          <ScrollArrow $down />
        </Scrollbar>
      </Viewport>

      <Taskbar>
        <StartButton><FaWindows size={16} color="#fff" /></StartButton>
        <SearchBox>
          <SearchGlyph size={18} strokeWidth={1.2} />
          <span>Type here to search</span>
        </SearchBox>
        <TaskTile $w={50}><TaskViewIcon /></TaskTile>
        {taskApps.map((app) => (
          <TaskTile key={app.key} $w={app.w} $line={app.line}>{app.icon}</TaskTile>
        ))}
        <TaskTile $w={39} $active $line>
          <ChromeLogo />
          <Badge $right={3} $bg="transparent"><BallAvatar size={15} /></Badge>
        </TaskTile>
        <TaskTile $w={39} $line><AffinityIcon /></TaskTile>
        <TaskTile $w={39} $line>
          <SlackIcon />
          <Badge $right={4}>4</Badge>
        </TaskTile>
        <TaskTile $w={39} $flash $line>
          <TelegramIcon />
          <Badge $right={1} $bg="#e8372f">16</Badge>
        </TaskTile>
        <TaskTile $w={39} $flash $line><FirefoxIcon /></TaskTile>
        <Tray>
          <TrayItem $w={27}><UpChevron size={16} strokeWidth={1.4} /></TrayItem>
          <TrayItem $w={24}><SpeakerIcon /></TrayItem>
          <TrayItem $w={24}><WifiIcon /></TrayItem>
          <TrayItem $w={23}><BatteryIcon /></TrayItem>
          <TrayItem $w={35}><TrayText>ENG</TrayText></TrayItem>
          <TrayItem $w={66}><TrayText $size={11}>3:50 PM<br />12/16/2022</TrayText></TrayItem>
          <TrayItem $w={38}><NotifyIcon /></TrayItem>
        </Tray>
      </Taskbar>
    </Screen>
  );
}

export default App;
